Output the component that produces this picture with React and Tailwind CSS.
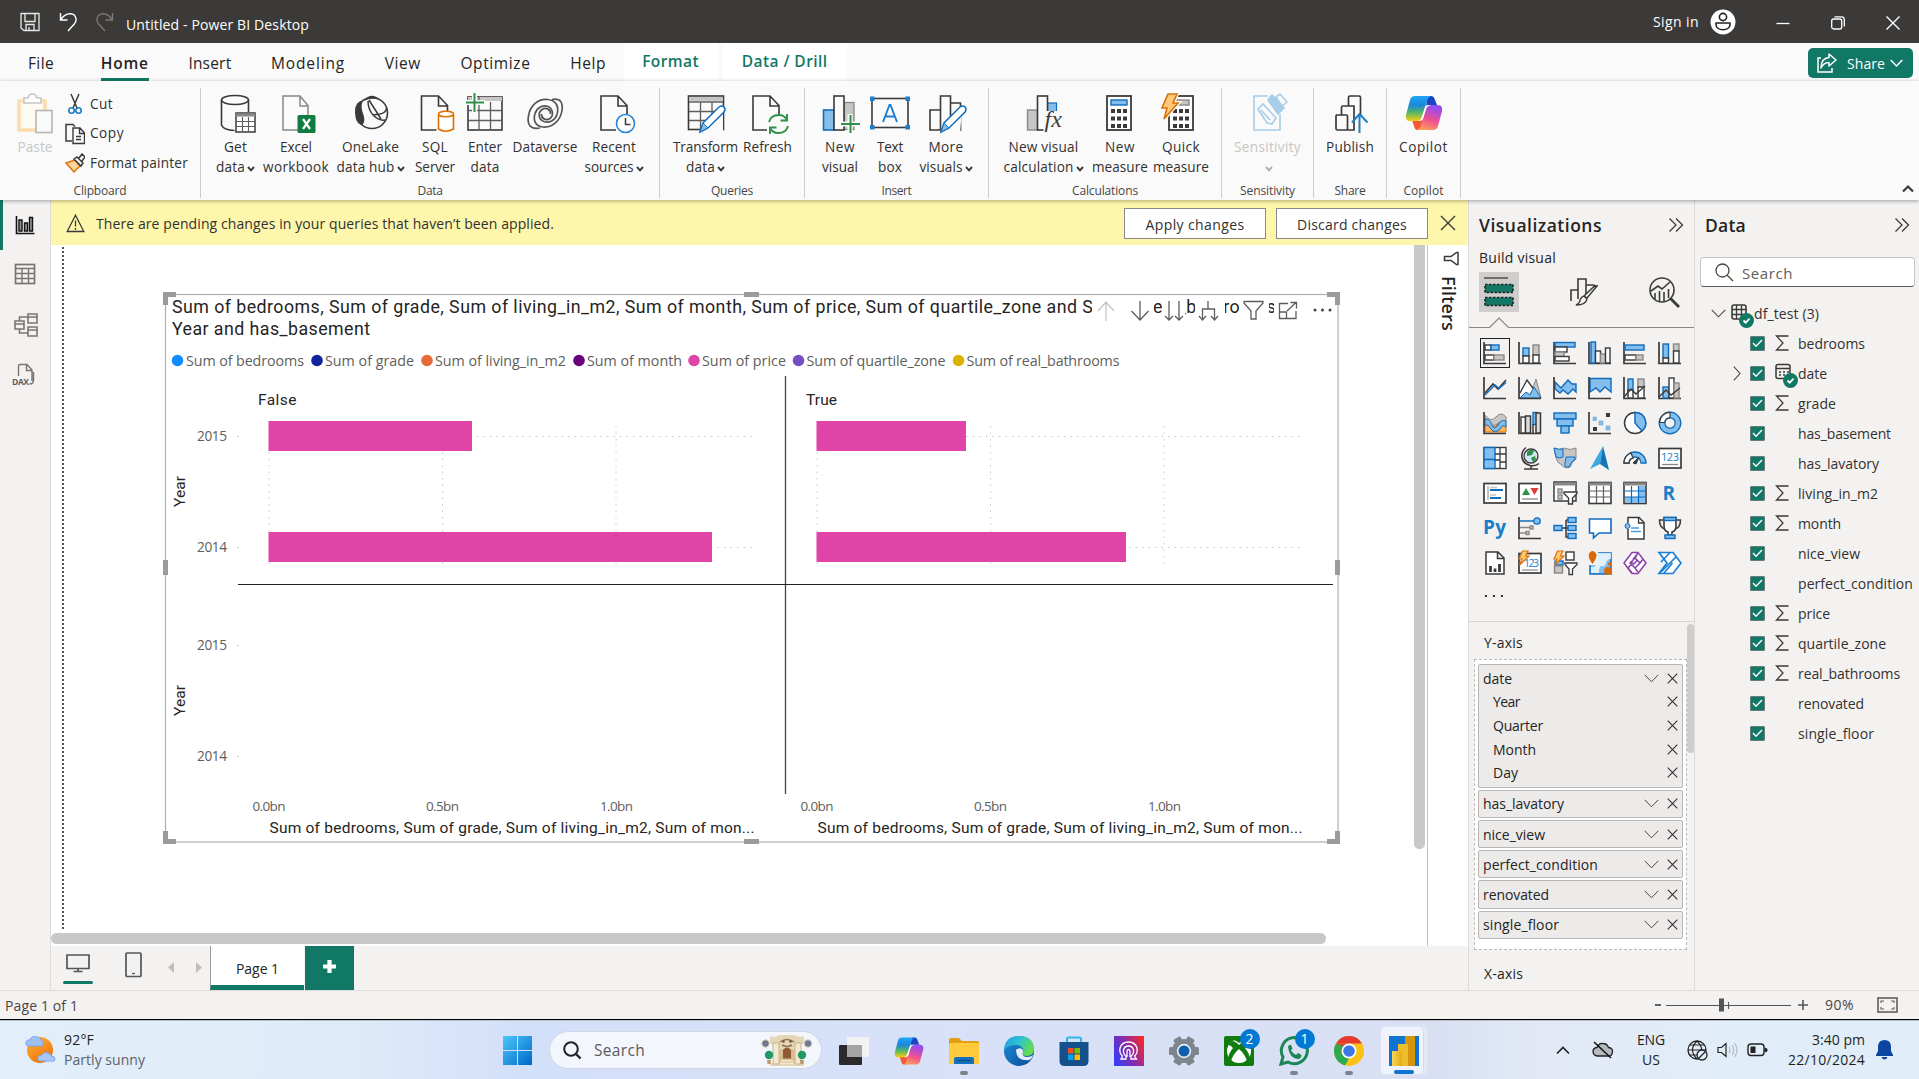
import React, { useLayoutEffect, useRef, useState } from "react";

const INK = "#3b3a39";
const BLUE = "#0f6cbd";
const SKY = "#83beec";
const GRAY = "#c8c6c4";
const MID = "#7a7574";

/* Text whose letter spacing is tuned so that it takes up exactly w pixels. */
function Fit({ w, className = "", children }) {
  const ref = useRef(null);
  const [ls, setLs] = useState(0);
  useLayoutEffect(() => {
    const natural = ref.current.getBoundingClientRect().width;
    setLs((w - natural) / String(children).length);
  }, []);
  return (
    <span ref={ref} className={"inline-block whitespace-nowrap " + className} style={{ letterSpacing: ls + "px" }}>
      {children}
    </span>
  );
}

function Svg({ w = 24, h = w, vb, className = "", children, ...rest }) {
  return (
    <svg width={w} height={h} viewBox={vb || `0 0 ${w} ${h}`} fill="none" className={"block shrink-0 " + className} {...rest}>
      {children}
    </svg>
  );
}

const Caret = ({ c = INK }) => (
  <Svg w={8} h={6} className="ml-[2px] mt-[3px]">
    <path d="M1 1l3 3.4L7 1" stroke={c} strokeWidth="1.9" />
  </Svg>
);

/* ---------- title bar ---------- */
function TitleBar() {
  return (
    <div className="flex h-[43px] shrink-0 items-center bg-[#3b3a38] text-white">
      <Svg w={20} className="ml-[20px]">
        <path d="M1 1.5h18v17H4L1 16z M5 1.5v8h10v-8 M6 18.5v-6h8v6 M9 18v-3" stroke="#e8e8e8" strokeWidth="1.3" />
      </Svg>
      <Svg w={18} h={20} className="ml-[19px]">
        <path d="M1.5 1v7h7 M1.5 8C5 2.500 9 1.500 12 1.800c5 .6 6.500 6.500 3.500 10L9 19" stroke="#fff" strokeWidth="1.4" />
      </Svg>
      <Svg w={18} h={20} className="ml-[19px]">
        <path d="M16.500 1v7h-7 M16.500 8C13 2.500 9 1.500 6 1.800c-5 .6-6.500 6.500-3.500 10L9 19" stroke="#7c7b7a" strokeWidth="1.3" />
      </Svg>
      <Fit w={183} className="ml-[12px] mt-[5px] text-[14px]">Untitled - Power BI Desktop</Fit>
      <div className="ml-auto flex items-center">
        <Fit w={46} className="text-[14px]">Sign in</Fit>
        <Svg w={26} className="ml-[11px]">
          <circle cx="13" cy="13" r="12.500" fill="#fff" />
          <circle cx="13" cy="8" r="3.600" stroke="#222" strokeWidth="1.600" />
          <path d="M6 14h14v1.500c0 7-14 7-14 0z" stroke="#222" strokeWidth="1.600" strokeLinejoin="round" />
        </Svg>
        <Svg w={14} className="ml-[40px]"><path d="M0.500 8.500h13" stroke="#fff" strokeWidth="1.300" /></Svg>
        <Svg w={14} className="ml-[41px] mt-[3px]">
          <rect x="0.700" y="3" width="10" height="10" rx="2" stroke="#fff" strokeWidth="1.300" />
          <path d="M3.500 .8h7q2.800 0 2.800 2.800v7" stroke="#fff" strokeWidth="1.300" />
        </Svg>
        <Svg w={14} className="ml-[41px] mr-[19px] mt-[3px]"><path d="M.5 .5l13 13M13.500 .5l-13 13" stroke="#fff" strokeWidth="1.400" /></Svg>
      </div>
    </div>
  );
}

/* ---------- ribbon tabs ---------- */
const TABS = [["File", 26], ["Home", 48], ["Insert", 43], ["Modeling", 74], ["View", 36], ["Optimize", 70], ["Help", 36]];
function Tabs() {
  return (
    <div className="flex h-[38px] shrink-0 bg-[#fafafa] text-[#252423]">
      <div className="flex gap-[39.700px] pl-[28px]">
        {TABS.map(([t, w]) => (
          <div key={t} className={"flex flex-col justify-between pt-[8px] " + (t === "File" ? "mr-[7px]" : "")}>
            <Fit w={w} className={"text-[15.500px] leading-[24px] " + (t === "Home" ? "font-semibold" : "")}>{t}</Fit>
            <div className={"h-[3px] " + (t === "Home" ? "bg-[#117865]" : "")} />
          </div>
        ))}
      </div>
      <div className="ml-[17.500px] flex h-[38px] w-[94px] items-center justify-center bg-white font-semibold text-[#117865]">
        <Fit w={57} className="text-[15.500px]">Format</Fit>
      </div>
      <div className="ml-[5px] flex h-[38px] w-[124px] items-center justify-center bg-white font-semibold text-[#117865]">
        <Fit w={86} className="text-[15.500px]">Data / Drill</Fit>
      </div>
      <div className="ml-auto mr-[6px] mt-[5px] flex h-[30px] w-[105px] items-center rounded-[5px] bg-[#117865] pl-[9px] text-white">
        <Svg w={20}>
          <path d="M4 5H1v14h14v-4" stroke="#fff" strokeWidth="1.500" />
          <path d="M12 1l7 6-7 6V9.500C8 9.500 6 11 4 15c0-6 3-10 8-10.500z" stroke="#fff" strokeWidth="1.500" strokeLinejoin="round" />
        </Svg>
        <Fit w={38} className="ml-[10px] text-[14px] font-medium">Share</Fit>
        <Svg w={13} h={9} className="ml-[5px]"><path d="M.7 1l5.800 6 5.800-6" stroke="#fff" strokeWidth="1.500" /></Svg>
      </div>
    </div>
  );
}

/* ---------- ribbon icons ---------- */
const Page = ({ x = 2, d = 34 }) => (
  <path d={`M${x + 15} ${d + 3}H${x}V3h17l9 9.500V22 M${x + 17} 3v10h9`} stroke={INK} strokeWidth="1.600" />
);
const Pencil = ({ x = 0 }) => (
  <g transform={`translate(${x} 0)`}>
    <path d="M11 39l3-9L30 14q3-2 5 0t0 5L19 35z" fill="#fff" stroke={BLUE} strokeWidth="1.500" />
    <path d="M11 39l3-9 5 5z" fill={SKY} stroke={BLUE} />
  </g>
);
const RI = {
  get: (
    <>
      <ellipse cx="16" cy="7" rx="13.500" ry="4.500" stroke={INK} strokeWidth="1.500" />
      <path d="M2.500 7v25q2 5 13 5.500 M29.500 7v12" stroke={INK} strokeWidth="1.600" />
      <rect x="17" y="20" width="19" height="19" fill="#fff" stroke={INK} strokeWidth="1.500" />
      <path d="M17 22h19" stroke="#8a8886" strokeWidth="3" />
      <path d="M17 28.500h19M17 33.500h19M23.500 24v15M29.500 24v15" stroke="#605e5c" strokeWidth="1.100" />
    </>
  ),
  excel: (
    <>
      <path d="M18 37H3V3h17l8 9.500V22 M20 3v10h8" stroke="#8a8886" strokeWidth="1.500" />
      <rect x="17.500" y="22" width="18" height="18" rx="1.500" fill="#107c41" />
      <path d="M23 26l7 10M30 26l-7 10" stroke="#fff" strokeWidth="2.200" />
    </>
  ),
  onelake: (
    <>
      <circle cx="20" cy="20" r="15.500" stroke={INK} strokeWidth="1.600" />
      <path d="M12 8Q16 2 22 3q4 1 5 4-7-3-15 1z" fill={INK} />
      <path d="M3.500 24Q1 9 11 7.500q-3 6 .5 14.500 2 6-1 10-6-1-7-8z" fill={INK} />
      <path d="M16 8q0 8 5 14 6 6 12 5M21 22l7-1q6-1 6.500-6 M17 7l12 19" stroke={INK} strokeWidth="1.500" />
    </>
  ),
  sql: (
    <>
      <Page x={5} />
      <path d="M22 22v14q7 4.500 15 0V22" fill="#fff" stroke="#e07000" strokeWidth="1.600" />
      <ellipse cx="29.500" cy="21" rx="7.500" ry="2.800" fill="#fff" stroke="#e07000" strokeWidth="1.600" />
    </>
  ),
  enter: (
    <>
      <rect x="3" y="4" width="34" height="33" stroke={INK} strokeWidth="1.600" />
      <path d="M3 6h34" stroke={GRAY} strokeWidth="4" />
      <path d="M3 17.500h34M3 27.500h34M14 4v33M25.500 9v28" stroke="#605e5c" strokeWidth="1.300" />
      <path d="M0 9.500h20M9.500 -1v20" stroke="#fafafa" strokeWidth="5" />
      <path d="M1 9.500h18M9.500 0v19" stroke="#2f9148" strokeWidth="2" />
    </>
  ),
  dataverse: (
    <>
      <path d="M14 35C4 37 1 31 2.500 23 4 13 12 5 22 6.500c9 1 11 8 9 15-2 6-8 9-13 7-6-2-6-9-2-12 4-2.500 9 0 8.500 4.500" stroke="#555" strokeWidth="1.700" />
      <path d="M26 6.500c9-2 11 4 10 11C34.500 27 27 35 17 34c-8-1-10-7-8-13.500 2-6 8-9 13-7 5 2 6 9 2 12-4 2.500-9 0-8.500-4.500" stroke="#555" strokeWidth="1.700" />
    </>
  ),
  recent: (
    <>
      <Page x={5} />
      <circle cx="29.500" cy="30.500" r="9" fill="#fff" stroke="#2b88d8" strokeWidth="1.600" />
      <path d="M29.500 25v6.500h5" stroke={INK} strokeWidth="1.500" />
    </>
  ),
  transform: (
    <>
      <rect x="1.500" y="3" width="35" height="33.500" stroke={INK} strokeWidth="1.600" />
      <path d="M2 6h34" stroke={GRAY} strokeWidth="4" />
      <path d="M2 9h34M2 18.500h34M2 27.500h34M13.500 9v27M25 9v27" stroke="#605e5c" strokeWidth="1.300" />
      <path d="M12 40L36 15v25z" fill="#fafafa" />
      <Pencil x={2} />
    </>
  ),
  refresh: (
    <>
      <Page x={3} />
      <path d="M17 40V24h22v16z" fill="#fafafa" />
      <path d="M19 29q2-7 9.500-7 6 0 8.500 5M37 21v6.500h-6.500 M38 33q-2 7-9.500 7-6 0-8.500-5M20 41v-6.500h6.500" stroke="#2f9148" strokeWidth="1.900" />
    </>
  ),
  newvisual: (
    <>
      <rect x="1.500" y="17" width="10.500" height="20" fill={SKY} stroke={BLUE} strokeWidth="1.600" />
      <rect x="22" y="9.500" width="10" height="27" fill={GRAY} stroke="#8a8886" strokeWidth="1.300" />
      <rect x="12" y="3" width="10" height="34" fill="#fafafa" stroke={INK} strokeWidth="1.600" />
      <path d="M18 31h20M28 21v20" stroke="#fafafa" strokeWidth="5" />
      <path d="M19 31h19M28.500 22v18" stroke="#2f9148" strokeWidth="2" />
    </>
  ),
  textbox: (
    <>
      <rect x="2" y="5.500" width="36" height="29" stroke={INK} strokeWidth="1.600" />
      <path d="M0 3.500h4.500V8H0zM35.500 3.500H40V8h-4.500zM0 32h4.500v4.500H0zM35.500 32H40v4.500h-4.500z" fill="#1a7fd0" />
      <path d="M13 29l6.500-17h1L27 29M15 23.500h10" stroke="#1a7fd0" strokeWidth="1.900" />
    </>
  ),
  more: (
    <>
      <path d="M2 17h10.500v20H2zM22.500 10h10v27h-10z M12.500 3h10v34h-10z" stroke={INK} strokeWidth="1.600" />
      <path d="M12 40L34 17l-2 23z" fill="#fafafa" />
      <Pencil x={2} />
    </>
  ),
  calc: (
    <>
      <rect x="2" y="17" width="10" height="20" fill={GRAY} stroke="#8a8886" strokeWidth="1.400" />
      <rect x="22" y="10" width="9" height="14" fill={SKY} stroke={BLUE} strokeWidth="1.200" />
      <rect x="12" y="3" width="10" height="34" fill="#fafafa" stroke={INK} strokeWidth="1.600" />
      <path d="M18 18h19v20H18z" fill="#fafafa" />
      <text x="19" y="34" fontFamily="Liberation Serif" fontStyle="italic" fontSize="24" fill={INK}>fx</text>
    </>
  ),
  measure: (
    <>
      <rect x="7" y="3" width="24" height="34" stroke={INK} strokeWidth="1.800" fill="#fff" />
      <rect x="11" y="7" width="16" height="5" fill={SKY} stroke={BLUE} strokeWidth="1.400" />
      <path d="M11 18h4m2 0h4m2 0h4M11 25.500h4m2 0h4m2 0h4M11 33h4m2 0h4m2 0h4" stroke={INK} strokeWidth="4" />
    </>
  ),
  quick: (
    <>
      <rect x="9" y="3" width="24" height="34" stroke={INK} strokeWidth="1.800" fill="#fff" />
      <rect x="14" y="7" width="15" height="5" fill={GRAY} stroke="#8a8886" strokeWidth="1.400" />
      <path d="M13 18h4m2 0h4m2 0h4M13 25.500h4m2 0h4m2 0h4M13 33h4m2 0h4m2 0h4" stroke={INK} strokeWidth="4" />
      <path d="M8 1h9l-4 9h5L4 26l3-11H2z" fill="#ffd08a" stroke="#fafafa" strokeWidth="4" />
      <path d="M8 1h9l-4 9h5L4 26l3-11H2z" fill="#ffc978" stroke="#d8730b" strokeWidth="1.600" />
    </>
  ),
  sens: (
    <g stroke="#a6cdea" strokeWidth="1.600">
      <path d="M19 3H5v34h26V21" />
      <path d="M9 16l5-5 13 14-4 6-5-1z M12 17l9 10" fill="#fafafa" />
      <path d="M19 7l4-5 12 13-6 6z" fill="#a6cdea" />
      <path d="M27 4l4-3 7 8-5 4z" fill="#fafafa" />
    </g>
  ),
  publish: (
    <>
      <path d="M4 22h10q1 0 1 1v14H5q-1.500 0-1.500-1.500V23z M9 22v-7.500q0-1.500 1.500-1.500h11v24H15 M16 13V4.500Q16 3 17.500 3h9Q28 3 28 4.500V22" stroke={INK} strokeWidth="1.700" />
      <path d="M27 40V22M19.500 29.500L27 21l8 8.500" stroke="#1f7fc4" strokeWidth="2" />
    </>
  ),
};

const CopilotArt = ({ w = 38, h = 36, id }) => (
  <Svg w={w} h={h} vb="0 0 38 34">
    <defs>
      <linearGradient id={id + "a"} x1="0" y1="0" x2="0" y2="1">
        <stop offset="0" stopColor="#1fa8f5" /><stop offset=".35" stopColor="#1a86e0" /><stop offset=".65" stopColor="#4fb56a" /><stop offset="1" stopColor="#f8cf10" />
      </linearGradient>
      <linearGradient id={id + "b"} x1="0.300" y1="0" x2="0" y2="1">
        <stop offset="0" stopColor="#9a4bea" /><stop offset=".5" stopColor="#f0528e" /><stop offset="1" stopColor="#ffae55" />
      </linearGradient>
    </defs>
    <path d="M22 0h4q3 0 4 4l2 5h-6q-4 0-5 4z" fill="#1745c4" />
    <path d="M16 34h-4q-2 0-3-4l-2-6h7q2 0 4-4z" fill="#f4593a" />
    <path d="M10 0h16q-3 1-4 5l-5 16q-1 4-5 4H5q-5 0-4-6L5 4q1-4 5-4z" fill={`url(#${id}a)`} />
    <path d="M28 34H12q3-1 4-5l5-16q1-4 5-4h7q5 0 4 6l-4 15q-1 4-5 4z" fill={`url(#${id}b)`} />
    <path d="M22 9h4q-4 1-5 4l-3 10q-1 2-5 2 3-1 4-5l3-9z" fill="#fff" opacity=".9" />
  </Svg>
);

/* first line, width, second line, width, cell width, caret, icon view box */
const CELL = {
  get: ["Get", 23, "data", 29, "w-[57px]", 1, "-3 -1 40 42"],
  excel: ["Excel", 32, "workbook", 66, "w-[64px]", 0, "-4 -1 40 42"],
  onelake: ["OneLake", 57, "data hub", 58, "w-[85px]", 1, "-1 -1 40 42"],
  sql: ["SQL", 26, "Server", 40, "w-[44px]", 0, "-1.500 -1 40 42"],
  enter: ["Enter", 34, "data", 29, "w-[56px]", 0, "0 -1 40 42"],
  dataverse: ["Dataverse", 65, "", 0, "w-[64px]", 0, "-1 -1 40 42"],
  recent: ["Recent", 44, "sources", 49, "w-[74px]", 1, "-2 -1 40 42"],
  transform: ["Transform", 65, "data", 29, "w-[69px]", 1, "-1 -1 40 42"],
  refresh: ["Refresh", 49, "", 0, "w-[55px]", 0, "-2 -1 40 42"],
  newvisual: ["New", 30, "visual", 36, "w-[54px]", 0, "-2 -1 40 42"],
  textbox: ["Text", 26, "box", 24, "w-[46px]", 0, "0 -1 40 42"],
  more: ["More", 35, "visuals", 43, "w-[66px]", 1, "-2 -1 40 42"],
  calc: ["New visual", 70, "calculation", 70, "w-[89px]", 1, "-1.500 -1 40 42"],
  measure: ["New", 30, "measure", 56, "w-[64px]", 0, "0 -1 40 42"],
  quick: ["Quick", 38, "measure", 56, "w-[58px]", 0, "1 -1 40 42"],
  sens: ["Sensitivity", 67, "", 0, "w-[67px]", 1, "-1 -1 40 42"],
  publish: ["Publish", 48, "", 0, "w-[72px]", 0, "-2.500 -1 40 42"],
  copilot: ["Copilot", 49, "", 0, "w-[73px]", 0, ""],
};
function Cell({ k }) {
  const [a, aw, b, bw, cls, caret, vb] = CELL[k];
  const dis = k === "sens";
  return (
    <div className={"flex flex-col items-center " + cls + (dis ? " text-[#c8c6c4]" : "")}>
      <div className="flex h-[42px] w-[40px] items-center justify-center">
        {k === "copilot" ? <CopilotArt id="rc" w={38} h={34} /> : <Svg w={40} h={42} vb={vb} className="overflow-visible">{RI[k]}</Svg>}
      </div>
      <div className="mt-[3px] h-[20px] leading-[20px]"><Fit w={aw}>{a}</Fit></div>
      <div className="flex h-[20px] items-center justify-center leading-[20px]">
        {b ? <Fit w={bw}>{b}</Fit> : null}
        {caret ? <Caret c={dis ? "#b0aeac" : INK} /> : null}
      </div>
    </div>
  );
}

function Group({ label, lw, cls, pad, items, children }) {
  return (
    <div className={"flex h-[110px] shrink-0 flex-col border-r border-[#cfcdcb] " + cls}>
      <div className={"flex h-[91px] pt-[4px] " + pad}>{children || items.map((k) => <Cell key={k} k={k} />)}</div>
      <div className="flex h-[19px] items-center justify-center pt-[5px] text-[12px] text-[#484644]"><Fit w={lw}>{label}</Fit></div>
    </div>
  );
}

function Ribbon() {
  return (
    <div className="z-10 flex h-[119px] shrink-0 bg-[#fafafa] pt-[7px] text-[13.600px] text-[#323130] shadow-[0_1px_4px_rgba(0,0,0,0.35)]">
      <Group label="Clipboard" lw={53} cls="w-[201px]" pad="">
        <div className="flex w-[56px] flex-col items-center pl-[14px] text-[#c8c6c4]">
          <Svg w={38} h={42} vb="-1 -1 38 42">
            <rect x="2" y="8" width="26" height="29" stroke="#fbdcb0" strokeWidth="3.500" fill="#fffaf2" />
            <path d="M7 10V5h4q1-4 4.500-4T20 5h4v5z" fill="#fff" stroke="#c8c6c4" strokeWidth="1.600" />
            <rect x="19" y="17.500" width="16" height="22" fill="#fafafa" stroke="#b8b6b4" strokeWidth="1.600" />
          </Svg>
          <Fit w={35} className="mt-[3px] leading-[20px]">Paste</Fit>
        </div>
        <div className="-mt-[3px] flex flex-col pl-[9px]">
          <div className="flex h-[30px] items-center">
            <Svg w={20} h={22}>
              <path d="M6 1l6 14M14 1L8 15" stroke={INK} strokeWidth="1.500" />
              <circle cx="6.500" cy="17.500" r="2.700" stroke="#1f7fc4" strokeWidth="1.600" /><circle cx="13.500" cy="17.500" r="2.700" stroke="#1f7fc4" strokeWidth="1.600" />
            </Svg>
            <Fit w={23} className="ml-[5px]">Cut</Fit>
          </div>
          <div className="flex h-[30px] items-center">
            <Svg w={20} h={22}>
              <path d="M7 18H1V1.500h7l2 2" stroke={INK} strokeWidth="1.500" />
              <path d="M8 5h7l4.500 5v10.500H8z M14.500 5v5.500h5 M11 13.500h5M11 16.500h5" fill="#fafafa" stroke={INK} strokeWidth="1.400" />
            </Svg>
            <Fit w={34} className="ml-[5px]">Copy</Fit>
          </div>
          <div className="flex h-[31px] items-center">
            <Svg w={20} h={22}>
              <path d="M1 10l8 9 6-6-5-6z" fill="#fbd59b" stroke="#e07000" strokeWidth="1.500" />
              <path d="M9 6l3-2 6 6-2 3z M14 5l3-4 3 3-3 4" fill="#fafafa" stroke={INK} strokeWidth="1.500" />
            </Svg>
            <Fit w={98} className="ml-[5px]">Format painter</Fit>
          </div>
        </div>
      </Group>
      <Group label="Data" lw={25} cls="w-[459px]" pad="pl-[6px]" items={["get", "excel", "onelake", "sql", "enter", "dataverse", "recent"]} />
      <Group label="Queries" lw={42} cls="w-[145px]" pad="pl-[11px]" items={["transform", "refresh"]} />
      <Group label="Insert" lw={30} cls="w-[184px]" pad="pl-[8px]" items={["newvisual", "textbox", "more"]} />
      <Group label="Calculations" lw={66} cls="w-[233px]" pad="pl-[10px]" items={["calc", "measure", "quick"]} />
      <Group label="Sensitivity" lw={55} cls="w-[92px]" pad="pl-[12px]" items={["sens"]} />
      <Group label="Share" lw={31} cls="w-[73px]" pad="" items={["publish"]} />
      <Group label="Copilot" lw={40} cls="w-[74px]" pad="" items={["copilot"]} />
      <Svg w={12} h={9} className="ml-auto mr-[5px] mt-[96px]"><path d="M1 7.500l5-5 5 5" stroke={INK} strokeWidth="2.200" /></Svg>
    </div>
  );
}

/* ---------- left navigation ---------- */
function LeftNav() {
  return (
    <div className="flex w-[51px] shrink-0 flex-col border-r border-[#dddbd9] bg-[#f3f2f1]">
      <div className="flex h-[50px] items-center border-l-[3px] border-[#117865] pl-[12px]">
        <Svg w={20}>
          <path d="M1.500 1v17.500h18" stroke="#111" strokeWidth="1.600" />
          <path d="M4 5h3v11H4zM9.500 8h3v8h-3zM14.500 2.500h3V16h-3z" fill="#999" stroke="#111" strokeWidth="1.400" />
        </Svg>
      </div>
      <div className="flex h-[50px] items-center pb-[2px] pl-[14px]">
        <Svg w={22}>
          <rect x="1.500" y="1.500" width="19" height="19" stroke={MID} strokeWidth="1.700" />
          <path d="M1 5.500h20M1 10.500h20M1 15.500h20M8 5v16M14.500 5v16" stroke={MID} strokeWidth="1.400" />
        </Svg>
      </div>
      <div className="flex h-[50px] items-center pb-[1px] pl-[14px]">
        <Svg w={24}>
          <path d="M1 8h9v8H1zM1 11h9M14 1h9v9h-9zM14 4h9M14 14h9v9h-9zM14 17h9M5.500 8V4H14M5.500 16v4H14" stroke={MID} strokeWidth="1.600" />
        </Svg>
      </div>
      <div className="flex h-[50px] items-center pl-[12px]">
        <Svg w={24} h={24}>
          <path d="M6.500 13V3q0-1.500 1.500-1.500h7L20 7v11 M14.500 2v5.500H20 M21.500 9v8q0 4-4 4" stroke={MID} strokeWidth="1.400" />
          <text x="0" y="21.500" fontSize="8.500" fontWeight="700" fontFamily="Open Sans" fill="#605e5c" textLength="17">DAX</text>
        </Svg>
      </div>
    </div>
  );
}

/* ---------- chart ---------- */
const LEGEND = [
  ["Sum of bedrooms", 177.5, 186, 118, "#118DFF"],
  ["Sum of grade", 317, 325, 89, "#12239E"],
  ["Sum of living_in_m2", 427, 435, 131, "#E66C37"],
  ["Sum of month", 579, 587, 95, "#6B007B"],
  ["Sum of price", 694, 702, 84, "#E044A7"],
  ["Sum of quartile_zone", 798.5, 806.5, 139, "#744EC2"],
  ["Sum of real_bathrooms", 958.5, 966.5, 153, "#D9B300"],
];
function Chart() {
  const din = "Roboto, sans-serif";
  const axis = "Sum of bedrooms, Sum of grade, Sum of living_in_m2, Sum of mon...";
  const grid = { stroke: "#c8c8c8", strokeWidth: 1, strokeDasharray: "1.500 5" };
  return (
    <svg width="1180" height="556" viewBox="162 290 1180 556" className="block" fontFamily="Open Sans, sans-serif">
      <rect x="165.500" y="294.500" width="1172.500" height="547.500" fill="#fff" stroke="#b3b0ad" strokeWidth="1.200" />
      <g fontFamily={din} fontSize="17.800" fill="#252423">
        <text x="172" y="312.500" textLength="1128">Sum of bedrooms, Sum of grade, Sum of living_in_m2, Sum of month, Sum of price, Sum of quartile_zone and Sum of real_bathrooms by</text>
        <text x="172" y="334.500" textLength="198">Year and has_basement</text>
      </g>
      <path d="M1092 296h62v26h-62zM1162 296h23v26h-23zM1195 296h30v26h-30zM1239 296h30v26h-30zM1274 296h63v26h-63z" fill="#fff" />
      <g stroke="#605e5c" strokeWidth="1.300" fill="none">
        <path d="M1106 321v-19M1098 311l8-9 8 9" stroke="#c8c6c4" />
        <path d="M1140 301v19M1131.500 311l8.500 9 8.500-9" />
        <path d="M1169 301v19M1165 316l4 4 4-4M1179 301v19M1175 316l4 4 4-4" />
        <path d="M1208 301v8M1202.500 320v-11h12v11M1199 316l3.500 4 3.500-4M1211 316l3.500 4 3.500-4" />
        <path d="M1244 301.500h19v1.500l-7 8v8h-5v-8l-7-8z" />
        <path d="M1288 303.500h-8.500v15h16.500V311M1279.500 312h7v6.500M1287 311l9-8.500M1290.500 302.500h6v6" />
      </g>
      <g fill="#444"><circle cx="1315" cy="310" r="1.500" /><circle cx="1322.500" cy="310" r="1.500" /><circle cx="1330" cy="310" r="1.500" /></g>
      {LEGEND.map(([t, cx, x, w, c]) => (
        <g key={t}>
          <circle cx={cx} cy="360.500" r="5.800" fill={c} />
          <text x={x} y="366" fontSize="14.300" fill="#605e5c" textLength={w}>{t}</text>
        </g>
      ))}
      <g fontFamily={din} fontSize="15.500" fill="#252423">
        <text x="258" y="405" textLength="38.500">False</text>
        <text x="806" y="405" textLength="31">True</text>
        <text transform="translate(185 507) rotate(-90)" textLength="31">Year</text>
        <text transform="translate(185 716) rotate(-90)" textLength="31">Year</text>
        <text x="269.500" y="833" textLength="485">{axis}</text>
        <text x="817.500" y="833" textLength="485">{axis}</text>
      </g>
      {[0, 548].map((dx) => (
        <g key={dx} transform={`translate(${dx} 0)`}>
          <path d="M269 426v138M442.500 426v138M616 426v138M269 436.500h484M269 547.500h484" {...grid} />
          <text x="252.500" y="811" fontSize="13.500" fill="#605e5c" textLength="33">0.0bn</text>
          <text x="426" y="811" fontSize="13.500" fill="#605e5c" textLength="33">0.5bn</text>
          <text x="600" y="811" fontSize="13.500" fill="#605e5c" textLength="33">1.0bn</text>
        </g>
      ))}
      <path d="M237 436.500h2M237 547.500h2M237 645.500h2M237 756.500h2" stroke="#c8c8c8" />
      <path d="M268.500 421H472v30H268.500zM268.500 532H712v30H268.500zM816.500 421H966v30H816.500zM816.500 532H1126v30H816.500z" fill="#E044A7" />
      <g fontSize="13.700" fill="#605e5c">
        <text x="197" y="441" textLength="30">2015</text>
        <text x="197" y="552" textLength="30">2014</text>
        <text x="197" y="650" textLength="30">2015</text>
        <text x="197" y="761" textLength="30">2014</text>
      </g>
      <path d="M785.500 376v418" stroke="#444" strokeWidth="1.300" />
      <path d="M238 584.500h1095" stroke="#222" strokeWidth="1.200" />
      <path d="M163 292h13v5h-8v8h-5zM1340 292h-13v5h8v8h5zM163 844h13v-5h-8v-8h-5zM1340 844h-13v-5h8v-8h5zM744 292h15v5h-15zM744 839h15v5h-15zM163 560h5v15h-5zM1335 560h5v15h-5z" fill="#9d9b99" />
    </svg>
  );
}

/* ---------- report canvas ---------- */
function Notice() {
  return (
    <div className="flex h-[45px] shrink-0 items-center bg-[#fef7ab] pt-px text-[14px] text-[#323130]">
      <Svg w={19} h={19} className="ml-[15px]">
        <path d="M9.500 1.200l8.300 16.300H1.200z M9.500 6.500v6M9.500 14v2" stroke={INK} strokeWidth="1.300" />
      </Svg>
      <Fit w={458} className="ml-[11px] mt-px">There are pending changes in your queries that haven’t been applied.</Fit>
      <div className="ml-auto flex h-[31px] w-[142px] items-center justify-center border border-[#8a8886] bg-white pt-[2px]"><Fit w={99}>Apply changes</Fit></div>
      <div className="ml-[10px] flex h-[31px] w-[152px] items-center justify-center border border-[#8a8886] bg-white pt-[2px]"><Fit w={110}>Discard changes</Fit></div>
      <Svg w={16} className="ml-[12px] mr-[12px]"><path d="M1 1l14 14M15 1L1 15" stroke={INK} strokeWidth="1.400" /></Svg>
    </div>
  );
}

function Canvas() {
  return (
    <div className="flex w-[1417px] shrink-0 flex-col">
      <Notice />
      <div className="flex h-[701px] shrink-0">
        <div className="flex w-[1377px] flex-col border-r border-[#c4c2c0] bg-white">
          <div className="flex h-[688px]">
            <div className="mt-[2px] h-[682px] w-[13px] border-r-2 border-dotted border-[#555]" />
            <div className="ml-[98px] mt-[45px]"><Chart /></div>
            <div className="ml-auto mr-[2px] h-[604px] w-[11px] rounded-b-full bg-[#c8c8c8]" />
          </div>
          <div className="h-[11px] w-[1275px] rounded-full bg-[#c8c8c8]" />
        </div>
        <div className="flex flex-1 flex-col items-center bg-white pt-[6px]">
          <Svg w={18} h={16} className="ml-[6px]"><path d="M16 1.500v12h-1.500L9 9.500H2.500v-4H9l5.500-4z" stroke={INK} strokeWidth="1.500" /></Svg>
          <div className="ml-[2px] mt-[9px] text-[18px] font-semibold leading-[20px] tracking-[0.200px] text-[#252423] [writing-mode:vertical-rl]">Filters</div>
        </div>
      </div>
      <div className="flex h-[44px] shrink-0 items-start bg-[#f3f2f1]">
        <div className="ml-[12px] flex h-[38px] w-[30px] flex-col items-center justify-between pt-[8px]">
          <Svg w={24} h={19}><path d="M1 1h22v13.500H1zM12 14.500V18M7.500 17.500h9" stroke="#555" strokeWidth="1.700" /></Svg>
          <div className="h-[3px] w-[30px] rounded-full bg-[#117865]" />
        </div>
        <Svg w={17} h={26} className="ml-[32px] mt-[6px]"><rect x="1" y="1" width="15" height="23.500" rx="1" stroke="#555" strokeWidth="1.700" /><path d="M7 21.500h3" stroke="#555" strokeWidth="1.300" /></Svg>
        <Svg w={6} h={11} className="ml-[26px] mt-[16px]"><path d="M6 0v11L0 5.500z" fill="#c0bebc" /></Svg>
        <Svg w={6} h={11} className="ml-[22px] mt-[16px]"><path d="M0 0v11l6-5.500z" fill="#c0bebc" /></Svg>
        <div className="ml-[8px] flex h-[44px] w-[94px] items-center justify-center border-b-[5px] border-l border-b-[#117865] border-l-[#999] bg-white pt-[5px] text-[14px] font-medium text-[#252423]">
          <Fit w={43}>Page 1</Fit>
        </div>
        <div className="ml-px flex h-[44px] w-[49px] items-center justify-center bg-[#117865] pb-[3px]">
          <Svg w={15}><path d="M7.500 1v13M1 7.500h13" stroke="#fff" strokeWidth="4.200" /></Svg>
        </div>
      </div>
    </div>
  );
}

/* ---------- visualization gallery ---------- */
const L = <path d="M1 1v21.500h22" stroke={INK} strokeWidth="1.700" />;
const B = (x, y, w, h, f = SKY, s = BLUE) => <rect key={`${x}-${y}-${f}`} x={x} y={y} width={w} height={h} fill={f} stroke={s} strokeWidth="1.400" />;
const W = (x, y, w, h) => B(x, y, w, h, "#fff", INK);
const G = (x, y, w, h) => B(x, y, w, h, GRAY, "#8a8886");
const Frame = <rect x="1" y="2.500" width="22" height="19.500" fill="#fff" stroke={INK} strokeWidth="1.700" />;
const Bolt = <path d="M4.500 0H10L7.500 5H11L1.500 14 4 8H1z" fill="#ffc978" stroke="#d8730b" strokeWidth="1.200" />;
const VIS = [
  <>{L}{W(2, 4, 6, 5)}{B(8, 4, 8, 5)}{W(2, 14, 9, 5)}{G(11, 14, 10, 5)}</>,
  <>{L}{B(5, 7, 6, 8)}{W(5, 15, 6, 7)}{G(15, 4, 6, 10)}{W(15, 14, 6, 8)}</>,
  <>{L}{B(2, 1.5, 20, 4.5)}{W(2, 6, 12, 5)}{G(2, 11, 9, 4.5)}{W(2, 15.5, 14, 4.5)}</>,
  <>{L}{B(3, 1, 4.5, 21)}{W(7.500, 10, 5, 12)}{G(12.500, 13, 5, 9)}{W(17.500, 7, 4.500, 15)}</>,
  <>{L}{B(2, 4, 19, 5)}{W(2, 14, 11, 5)}{G(13, 14, 7, 5)}</>,
  <>{L}{B(5, 3, 5.500, 14)}{W(5, 17, 5.500, 5)}{G(15.500, 3, 5.500, 7)}{W(15.500, 10, 5.500, 12)}</>,
  <>{L}<path d="M2 17l8-9 5 5 8-9" stroke={INK} strokeWidth="1.600" /><path d="M2 19L12 9l4 3.500 7-6" stroke={BLUE} strokeWidth="1.400" /></>,
  <><path d="M11 22l7-19 5 19z" fill={GRAY} stroke="#8a8886" /><path d="M2 17L9 4l8 11" stroke={INK} strokeWidth="1.400" fill="#fff" /><path d="M2 22l6-6 4 3 4-8 7 11z" fill={SKY} stroke={BLUE} />{L}</>,
  <><path d="M2 6l6 6 7-8 4 4h4v8l-3-3-5 5-5-4-3 3-5-4z" fill={SKY} stroke={BLUE} strokeWidth="1.400" />{L}</>,
  <><path d="M2 2.500h21V16l-6-5-5 5-4-4-6 4z" fill={SKY} stroke={BLUE} strokeWidth="1.400" />{L}</>,
  <>{L}{B(5, 3, 5, 13)}{W(5, 14, 5, 8)}{G(15, 3, 6, 8)}{W(15, 11, 6, 11)}<path d="M1 21l7-8 5 5 9-8" stroke={INK} strokeWidth="1.400" /></>,
  <>{L}{B(5, 11, 6, 11)}{W(11, 2, 5, 20)}{G(16, 7, 5, 15)}<path d="M1 21l7-7 5 5 9-7" stroke={INK} strokeWidth="1.400" /></>,
  <><path d="M2 4q6 8 11 2t10 0v6q-5-3-9 1t-12-3z" fill={GRAY} stroke="#8a8886" /><path d="M2 13h5q4 5 8 0h8v8H2z" fill="#ffb45c" stroke="#d8730b" /><path d="M2 8q5 0 7 6t6 0q3-6 8-4v6q-4-3-6 2-5 5-9 0-2-5-6-4z" fill={SKY} stroke={BLUE} />{L}</>,
  <>{L}{W(3, 6, 4.500, 16)}{B(15, 1.500, 4, 12)}<path d="M7.500 5h5v17h-5zM15 13v9M18 2h4.500v20H18z" fill="#ddd" stroke={INK} strokeWidth="1.500" /></>,
  <>{B(1, 2, 22, 6)}{B(4, 8, 16, 7)}{B(8, 15, 8, 7)}</>,
  <>{L}<path d="M18 2h4v4h-4zM5 16h4v4H5z" fill={INK} /><path d="M5 6h3.500v3.500H5zM11 10h4v4h-4zM18 15h4v4h-4z" fill={SKY} stroke="#6ba9dc" strokeWidth=".6" /></>,
  <><circle cx="12" cy="12" r="10.500" fill="#fff" stroke={INK} strokeWidth="1.500" /><path d="M12 1.500V12l7 8A10.500 10.500 0 0 0 12 1.500z" fill={SKY} stroke={BLUE} strokeWidth="1.500" /></>,
  <><circle cx="12" cy="12" r="8" stroke={SKY} strokeWidth="5.500" /><path d="M4 12a8 8 0 0 1 8-8" stroke="#fff" strokeWidth="5.500" /><circle cx="12" cy="12" r="10.800" stroke={BLUE} strokeWidth="1.300" /><circle cx="12" cy="12" r="5.200" stroke={BLUE} strokeWidth="1.300" fill="#f3f2f1" /><path d="M1.500 11A10.800 10.800 0 0 1 12 1.200M6.800 11.500A5.200 5.200 0 0 1 12 6.800M1 11.500h6M12 1v6" stroke={INK} strokeWidth="1.200" /></>,
  <>{W(1, 1.500, 22, 21)}{B(1, 1.500, 11, 12)}{B(1, 13.500, 11, 9)}<path d="M12 8h11M17 8v14M12 14h5M17 16h6M17 2v6" stroke={INK} strokeWidth="1.300" /></>,
  <><circle cx="13" cy="10" r="7" fill="#cfe7f7" stroke={INK} strokeWidth="1.300" /><path d="M9 6q4-4 7-1l-2 4-5 1zM13 12l4-2 1 4-3 2z" fill="#2f9148" /><path d="M8 1.500q-5 4-4 10t8 8q6 1 9-2M13 20v3M6 23h14" stroke={INK} strokeWidth="1.600" /></>,
  <><path d="M1 2q6 3 10 0 6 3 12 0v11q-4 3-6 8-6 2-8-2-5-2-6-7z" fill={GRAY} stroke="#8a8886" /><path d="M1 2q5 2 9 1v8q-4 2-7 0zM13 11h9v2q-4 3-6 8-5 1-4-4z" fill={SKY} stroke={BLUE} /></>,
  <><path d="M15 0L2 23l10-5z" fill="#3fa9df" /><path d="M15 0l6 24-9-6z" fill="#1173b8" /></>,
  <><path d="M1 17a11 11 0 0 1 22 0h-5a6 6 0 0 0-12 0z" fill={SKY} stroke={BLUE} strokeWidth="1.300" /><path d="M1 17A11 11 0 0 1 8 7l2 5q-4 1-4 5z" fill="#fff" stroke={INK} strokeWidth="1.300" /><path d="M10 17l6-6-3 7z" fill={INK} stroke={INK} /></>,
  <>{Frame}<text x="3" y="15" fontSize="11" fontFamily="Open Sans" fill="#1a7fd0" textLength="18">123</text><path d="M4 18.500h16" stroke="#8a8886" strokeWidth="1.300" /></>,
  <>{Frame}<path d="M5 5v14" stroke="#8a8886" /><path d="M7 6.500h7M7 14h6" stroke={GRAY} strokeWidth="1.500" /><path d="M7 9h13M7 17h11" stroke={BLUE} strokeWidth="2" /></>,
  <>{Frame}<path d="M4 14l4-7 4 7z" fill="#2f9148" /><path d="M12.500 7h8l-4 7z" fill="#e03a3a" /><path d="M4 18h16" stroke="#8a8886" strokeWidth="1.300" /></>,
  <><rect x="1" y="1" width="22" height="19" fill="#fff" stroke={INK} strokeWidth="1.500" /><path d="M1 3h22" stroke="#8a8886" strokeWidth="3" />{G(5, 8, 4, 4)}{G(5, 14, 4, 4)}<path d="M11 11h13v1.500L19.500 17v6h-4v-6L11 12.500z" fill="#fff" stroke={INK} strokeWidth="1.400" /></>,
  <><rect x="1" y="1.500" width="22" height="21" fill="#fff" stroke={INK} strokeWidth="1.600" /><path d="M1 3h22" stroke="#8a8886" strokeWidth="3" /><path d="M1 10h22M1 16h22M8.500 5v17M15.500 5v17" stroke="#605e5c" strokeWidth="1.200" /></>,
  <><rect x="1" y="1.500" width="22" height="21" fill="#fff" stroke={INK} strokeWidth="1.600" /><path d="M15.500 5H22v17H2v-6h13.500z" fill={SKY} /><path d="M1 3h22" stroke="#8a8886" strokeWidth="3" /><path d="M1 10h22M1 16h22M8.500 5v17M15.500 5v17" stroke={BLUE} strokeWidth="1.200" /></>,
  <text x="4.500" y="18.500" fontSize="19" fontWeight="700" fontFamily="Open Sans" fill="#1a7fc8">R</text>,
  <text x="0" y="18" fontSize="19" fontWeight="700" fontFamily="Open Sans" fill="#1a7fc8" textLength="23">Py</text>,
  <>{L}<path d="M2 5h15" stroke={BLUE} strokeWidth="1.500" /><circle cx="19" cy="5" r="3.200" fill={SKY} stroke={BLUE} strokeWidth="1.300" /><path d="M2 11.500h10M2 17h6" stroke="#8a8886" strokeWidth="1.300" />{G(12, 10, 3, 3)}{G(8, 15.500, 3, 3)}</>,
  <><path d="M8 12h5M13 4v17h3M13 4h3M13 12h3" stroke={INK} strokeWidth="1.500" />{B(1, 9.500, 8, 5)}{B(15, 1.500, 8, 5)}{B(15, 9.500, 8, 5)}{B(15, 17.500, 8, 5)}</>,
  <path d="M1.500 3h21.500v14H11l-5.500 5V17h-4z" fill="#fff" stroke={BLUE} strokeWidth="1.600" />,
  <><path d="M5 7V1.500h11l5 5V23H5V13" fill="#fff" stroke={INK} strokeWidth="1.500" /><path d="M15.500 1.500V7H21" stroke={INK} strokeWidth="1.300" /><circle cx="4.500" cy="10" r="2.500" fill={SKY} stroke={BLUE} /><path d="M8 12h8M8 15.500h10" stroke="#4ba0de" strokeWidth="1.300" /></>,
  <><path d="M6 4H1.500q0 8 6 9M18 4h4.500q0 8-6 9" stroke={INK} strokeWidth="1.500" /><path d="M6 1.500h12V10q0 5-4 6v3h-4v-3q-4-1-4-6z" fill="#fff" stroke={INK} strokeWidth="1.600" />{B(6, 1.500, 12, 3)}{B(7, 19, 10, 3.500)}</>,
  <><path d="M3 1h12l6 6v16H3z M14.500 1v6.500H21" fill="#fff" stroke={INK} strokeWidth="1.500" /><path d="M7.500 15v6M12 17.500V21M16.500 13v8" stroke={INK} strokeWidth="2.800" /></>,
  <>{Frame}<text x="6" y="16" fontSize="10.500" fontFamily="Open Sans" fill="#1a7fd0" textLength="15">123</text><path d="M4 19h16" stroke="#8a8886" strokeWidth="1.200" />{Bolt}</>,
  <>{W(13, 1, 8, 8)}{B(2, 10, 8, 4)}{G(1.500, 15, 8, 7)}{Bolt}<path d="M12 12h12v1.500L19.500 18v5.500h-3.500V18L12 13.500z" fill="#fff" stroke={INK} strokeWidth="1.300" /></>,
  <><path d="M2 2h21v21H2z" fill={SKY} stroke={BLUE} strokeWidth="1.500" /><path d="M9 2h14v6q-4 0-5 4t-4 3-3 7H3v-6q6 0 7-5z" fill="#fff" opacity=".75" /><path d="M0 0h10v14H0z" fill="#f3f2f1" /><path d="M4.500 13Q0 7 .8 3.500 2 0 4.500 0T8.500 3.500Q9 7 4.500 13z" fill="#d8690b" /><circle cx="20" cy="20" r="4" fill="#d8690b" /><circle cx="22" cy="13" r="2" fill="#d8690b" /></>,
  <g stroke="#8b3fa8" strokeWidth="1.500" fill="#fff"><path d="M9 1.500h6l8 10.500-8 10.500H9L1 12z" /><path d="M12 7l5 5-5 5-5-5zM15 2l-5 6.500M9 22l-4-5 5-6M12 7l2-3M17 12l3-4M12 17l3 4M14 9.500L9.500 14.500" fill="none" /></g>,
  <g stroke="#1a7fd8" strokeWidth="1.700" fill="#fff"><path d="M1 1.500h14L23 12l-8 10.500H1L9 12z" /><path d="M12 1.500l-9 9.500M18 6L3 21M14.500 12L6 22" /></g>,
];

const Chev2 = () => (
  <Svg w={16} h={16}><path d="M1.500 1.500L8 8l-6.500 6.500M8 1.500L14.500 8 8 14.500" stroke={INK} strokeWidth="1.300" /></Svg>
);
const DownX = ({ down }) => (
  <div className="ml-auto flex items-center gap-[8px]">
    {down ? <Svg w={15} h={9}><path d="M.7 .8l6.800 7 6.800-7" stroke="#484644" strokeWidth="1" /></Svg> : null}
    <Svg w={11}><path d="M.7 .7l9.600 9.600M10.300 .7L.7 10.300" stroke="#323130" strokeWidth="1.100" /></Svg>
  </div>
);
const SUBS = [["Year", 27], ["Quarter", 50], ["Month", 43], ["Day", 25]];
const CARDS = [["has_lavatory", 81], ["nice_view", 62], ["perfect_condition", 115], ["renovated", 66], ["single_floor", 76]];

function Visualizations() {
  return (
    <div className="flex w-[227px] shrink-0 flex-col border-l border-r border-[#dddbd9] bg-[#f3f2f1] text-[14px] text-[#252423]">
      <div className="flex h-[45px] items-center pl-[10px] pt-[5px]">
        <Fit w={123} className="text-[17.500px] font-semibold">Visualizations</Fit>
        <div className="ml-auto mr-[10px]"><Chev2 /></div>
      </div>
      <div className="h-[27px] pl-[10px] leading-[25px]"><Fit w={77} className="font-medium">Build visual</Fit></div>
      <div className="flex h-[40px] items-center pl-[10px]">
        <div className="flex h-[40px] w-[40px] items-center justify-center bg-[#d0cecc]">
          <Svg w={30} h={34}>
            <path d="M0 3h24" stroke={INK} strokeWidth="1.300" />
            <path d="M1 9.500h28v8H1zM1 22.500h28v8H1z" fill="#117865" stroke="#222" strokeWidth="1.600" strokeDasharray="2.500 1.500" />
          </Svg>
        </div>
        <Svg w={28} h={30} className="ml-[51px]">
          <path d="M1 24V13h7v9M8 13V2h8v16M16 8h7l3 1" stroke={INK} strokeWidth="1.600" />
          <path d="M27 9L17 21l-3-2L24 9.500zM14 19l3 3q-1 6-11 6 4-2 4-5 1-3 4-4z" fill="#f3f2f1" stroke={INK} strokeWidth="1.400" />
        </Svg>
        <Svg w={31} h={31} className="ml-[51px]">
          <circle cx="13" cy="13" r="12" stroke={INK} strokeWidth="1.600" />
          <path d="M2 14l7-5 4 3 8-7M6 16v6M10.500 14v10M15 15v9M19.500 12v9" stroke={INK} strokeWidth="1.600" />
          <path d="M21.500 21.500L30 30" stroke={INK} strokeWidth="2.800" />
        </Svg>
      </div>
      <Svg w={225} h={16}><path d="M0 15.500h20.500l9.500-9.500 9.500 9.500H225" stroke="#8a8886" strokeWidth="1.200" /></Svg>
      <div className="mt-[7px] grid w-[218px] auto-rows-[35px] grid-cols-[repeat(6,35px)] pl-[8px]">
        {VIS.map((v, i) => (
          <div key={i} className="flex h-[35px] w-[35px] items-center justify-center">
            <div className={"flex h-[30px] w-[30px] items-center justify-center " + (i === 0 ? "border border-[#222]" : "")}>
              <Svg w={24} className="overflow-visible">{v}</Svg>
            </div>
          </div>
        ))}
      </div>
      <div className="flex h-[42px] items-start gap-[6px] border-b border-[#d8d6d4] pl-[16px] pt-[15px]">
        {[0, 1, 2].map((i) => <div key={i} className="h-[2px] w-[2px] bg-[#333]" />)}
      </div>
      <div className="flex flex-1">
        <div className="flex w-[218px] flex-col pl-[5px]">
          <div className="h-[37px] pl-[10px] pt-[10px] leading-[22px]"><Fit w={39}>Y-axis</Fit></div>
          <div className="flex h-[291px] w-[213px] flex-col gap-[2px] border border-dashed border-[#bdbbb9] bg-white pl-[3px] pt-[4px]">
            <div className="w-[205px] rounded-[2px] border border-[#b8b6b4] bg-[#ecebea] pb-[2px] pl-[4px] pr-[4px]">
              <div className="flex h-[25px] items-center pt-[2px]"><Fit w={29}>date</Fit><DownX down /></div>
              {SUBS.map(([t, w]) => (
                <div key={t} className="flex h-[23.700px] items-center pl-[10px]"><Fit w={w}>{t}</Fit><DownX /></div>
              ))}
            </div>
            {CARDS.map(([t, w]) => (
              <div key={t} className="flex h-[28.200px] w-[205px] shrink-0 items-center rounded-[2px] border border-[#b8b6b4] bg-[#ecebea] pl-[4px] pr-[4px]"><Fit w={w}>{t}</Fit><DownX down /></div>
            ))}
          </div>
          <div className="pl-[10px] pt-[13px] leading-[22px]"><Fit w={39}>X-axis</Fit></div>
        </div>
        <div className="mt-[2px] h-[129px] w-[7px] rounded-full bg-[#d0cecc]" />
      </div>
    </div>
  );
}

/* ---------- data pane ---------- */
const FIELDS = [
  ["bedrooms", 67, "s"], ["date", 29, "d"], ["grade", 38, "s"], ["has_basement", 93], ["has_lavatory", 81], ["living_in_m2", 80, "s"],
  ["month", 43, "s"], ["nice_view", 62], ["perfect_condition", 115], ["price", 32, "s"], ["quartile_zone", 88, "s"],
  ["real_bathrooms", 102, "s"], ["renovated", 66], ["single_floor", 76],
];
const Badge = () => <><circle cx="15.500" cy="16.500" r="7.500" fill="#117865" /><path d="M12.500 16.500l2.200 2.200 3.800-4" stroke="#fff" strokeWidth="1.800" /></>;

function DataPane() {
  return (
    <div className="flex w-[224px] flex-1 flex-col bg-[#f3f2f1] text-[14px] text-[#323130]">
      <div className="flex h-[45px] items-center pl-[10px] pt-[5px]">
        <Fit w={41} className="text-[17.500px] font-semibold text-[#252423]">Data</Fit>
        <div className="ml-auto mr-[9px]"><Chev2 /></div>
      </div>
      <div className="ml-[5px] mt-[12px] flex h-[30px] w-[215px] items-center rounded-[4px] border border-[#c8c6c4] border-b-[#605e5c] bg-white pl-[14px]">
        <Svg w={19}><circle cx="7.500" cy="7.500" r="6.500" stroke="#484644" strokeWidth="1.300" /><path d="M12 12l6 6" stroke="#484644" strokeWidth="1.300" /></Svg>
        <Fit w={51} className="ml-[8px] mt-[2px] text-[15px] text-[#605e5c]">Search</Fit>
      </div>
      <div className="mt-[11px] flex h-[30px] items-center pl-[16px]">
        <Svg w={15} h={9}><path d="M.7 .8l6.800 7 6.800-7" stroke="#484644" strokeWidth="1.100" /></Svg>
        <Svg w={24} h={26} vb="0 -2 24 26" className="ml-[5px] mt-[3px]">
          <rect x="1" y="1" width="14" height="14" rx="2" stroke={INK} strokeWidth="1.600" /><path d="M1 5.500h14M1 10.500h14M5.500 1v14M10.500 1v14" stroke={INK} strokeWidth="1.300" /><Badge />
        </Svg>
        <Fit w={65} className="-ml-[1px]">df_test (3)</Fit>
      </div>
      {FIELDS.map(([t, w, k]) => (
        <div key={t} className="flex h-[30px] items-center">
          <div className="flex w-[55px] items-center pl-[38px]">
            {k === "d" ? <Svg w={8} h={15}><path d="M.8 .7L7 7.500.8 14.300" stroke="#484644" strokeWidth="1.100" /></Svg> : null}
          </div>
          <div className="flex h-[15px] w-[15px] items-center justify-center rounded-[1px] border border-[#6b7d78] bg-[#117865]">
            <Svg w={11} h={9}><path d="M1 4l3 3.200L10 1" stroke="#fff" strokeWidth="1.400" /></Svg>
          </div>
          <div className="flex h-[30px] w-[33px] items-center pl-[10px]">
            {k === "s" ? <Svg w={14} h={16}><path d="M13.500 1H1.500l6.500 7-6.500 7h12" stroke={INK} strokeWidth="1.300" /></Svg> : null}
            {k === "d" ? (
              <Svg w={24} h={26} vb="0 -2 24 26" className="mt-[3px]">
                <rect x="1" y="0.500" width="14" height="14" rx="2" stroke={INK} strokeWidth="1.500" /><path d="M1 4.500h14M4 8h2m2 0h2m2 0h2M4 11h2m2 0h2" stroke={INK} strokeWidth="1.500" /><Badge />
              </Svg>
            ) : null}
          </div>
          <Fit w={w}>{t}</Fit>
        </div>
      ))}
    </div>
  );
}

/* ---------- status bar ---------- */
function StatusBar() {
  return (
    <div className="flex h-[30px] shrink-0 items-center border-b border-t border-b-black border-t-[#dddbd9] bg-[#f3f2f1] text-[14px] text-[#484644]">
      <Fit w={73} className="ml-[5px] mt-[1px]">Page 1 of 1</Fit>
      <Svg w={153} h={16} className="ml-auto">
        <path d="M0 8h6" stroke="#555" strokeWidth="1.800" />
        <path d="M11 8.500h125M73.500 5v7" stroke="#555" strokeWidth="1.100" />
        <path d="M64 1.500h5v13h-5z" fill="#555" />
        <path d="M143 8h10M148 3v10" stroke="#555" strokeWidth="1.600" />
      </Svg>
      <Fit w={29} className="ml-[17px] -mt-[1px]">90%</Fit>
      <Svg w={21} h={16} className="ml-[23px] mr-[21px]">
        <rect x="1" y="1" width="19" height="14" stroke="#605e5c" strokeWidth="1.600" />
        <path d="M4 6V4h3M14 4h3v2M4 10v2h3M14 12h3v-2" stroke="#605e5c" strokeWidth="1.100" />
      </Svg>
    </div>
  );
}

/* ---------- taskbar ---------- */
const Badge2 = ({ n }) => (
  <span className="absolute -right-[6px] -top-[7px] flex h-[20px] w-[20px] items-center justify-center rounded-full bg-[#0078d4] text-[14px] leading-none text-white">{n}</span>
);
const APPS = [
  ["tasks", <Svg w={30}><rect x="0" y="9" width="23" height="20" rx="1" fill="#2a2a2a" /><rect x="8" y="1" width="22" height="20" rx="1" fill="#f2f2f2" /><path d="M8 9h15v12H8z" fill="#a4a4a4" /></Svg>],
  ["copilot", <CopilotArt id="tb" w={30} h={28} />],
  ["files", <Svg w={30} h={28}><path d="M0 3q0-2 2-2h8l3 3h15q2 0 2 2v5H0z" fill="#e0a010" /><rect y="6" width="30" height="21" rx="1.500" fill="#ffcb3d" /><path d="M5 27v-5q0-2 2-2h16q2 0 2 2v5z" fill="#1272c0" /><path d="M8 23.500h14" stroke="#0a4a86" strokeWidth="1.300" /></Svg>, "dot"],
  ["edge", (
    <Svg w={30}>
      <defs>
        <linearGradient id="e1" x1="0" y1="0" x2="1" y2=".4"><stop offset="0" stopColor="#1da0e0" /><stop offset=".55" stopColor="#2fc3cf" /><stop offset="1" stopColor="#62dc50" /></linearGradient>
        <linearGradient id="e2" x1="0" y1="0" x2="1" y2="1"><stop offset="0" stopColor="#1b8fe0" /><stop offset="1" stopColor="#0c4a94" /></linearGradient>
      </defs>
      <circle cx="15" cy="15" r="15" fill="url(#e2)" />
      <path d="M0 14Q1 0 15 0q14 0 15 12 0 8-7 8-5 0-5-3 2-1 1-4-2-4-7-4-8 0-12 5z" fill="url(#e1)" />
      <path d="M12 14q3-3 6-1 2 2 .3 4.500Q19 21 23 21q4 0 6-2-1 4-4 5-10 1-12-5-1-3-1-5z" fill="#e3ecf8" />
    </Svg>
  )],
  ["store", (
    <Svg w={30}><path d="M8 8V3q0-1.500 1.500-1.500h11Q22 1.500 22 3v5" stroke="#35b5e8" strokeWidth="2.200" /><path d="M0.500 6h29v19q0 5-5 5h-19q-5 0-5-5z" fill="#15508c" /><path d="M9 12h5.500v5.500H9z" fill="#f25022" /><path d="M15.500 12H21v5.500h-5.500z" fill="#7fba00" /><path d="M9 18.500h5.500V24H9z" fill="#00a4ef" /><path d="M15.500 18.500H21V24h-5.500z" fill="#ffb900" /></Svg>
  )],
  ["game", (
    <Svg w={30}>
      <defs><linearGradient id="g1" x1="0" y1=".7" x2="1" y2=".2"><stop offset="0" stopColor="#3a3cf5" /><stop offset=".5" stopColor="#8a2ba8" /><stop offset="1" stopColor="#f7282c" /></linearGradient></defs>
      <path d="M0 0h30v30H0z" fill="url(#g1)" />
      <path d="M7 23l1.500-3Q5 17 6 12q2-6 8.500-6T23 12q1 5-2.500 8l2 3h-5.500v-3q3-2 2.500-6-1-4-5-4t-5 4q-.5 4 2.500 6v3z M13 21v-6q1.500-3 3 0v6" stroke="#fff" strokeWidth="1.300" />
    </Svg>
  )],
  ["gear", (
    <Svg w={30}>
      <g fill="#7d858d"><circle cx="15" cy="15" r="12" />
        {[0, 60, 120, 180, 240, 300].map((a) => <rect key={a} x="11" y="0" width="8" height="7" rx="1.500" transform={`rotate(${a + 30} 15 15)`} />)}
      </g>
      <circle cx="15" cy="15" r="7.200" fill="#e9eef5" /><circle cx="15" cy="15" r="5.500" fill="#0f5fb0" />
    </Svg>
  )],
  ["xbox", (
    <Svg w={30}><rect width="30" height="30" rx="2" fill="#107c10" /><circle cx="15" cy="15" r="12" fill="#fff" /><path d="M8 4q4 0 7 3 3-3 7-3l-3-2h-8zM15 9q-4-4-7-4-3 2-4 4 3 0 5 3-5 6-5 12l3 2q1-7 8-13 7 6 8 13l3-2q0-6-5-12 2-3 5-3-1-2-4-4-3 0-7 4z" fill="#107c10" /></Svg>
  ), "", "2"],
  ["whatsapp", (
    <Svg w={30}><path d="M2 28l2-7A13 13 0 1 1 9 26z" stroke="#1a8754" strokeWidth="3" /><path d="M9 11q1-3 3-2l1.500 3.500-1.500 2q2 3 5 4.500l2-2 3.500 2q0 4-4 4-8-1-9.500-12z" fill="#1a8754" /></Svg>
  ), "dot", "1"],
  ["chrome", (
    <Svg w={30}><circle cx="15" cy="15" r="15" fill="#fbc116" /><path d="M2 7.500A15 15 0 0 1 28 7.500H15z" fill="#e33b2e" /><path d="M2 7.500l6.500 11.300 6.500 3.700-4 7A15 15 0 0 1 2 7.500z" fill="#2da94f" /><path d="M2 7.500L8.500 18.800 15 7.500z" fill="#e33b2e" /><path d="M2 7.500L8.500 18.800 11 11z" fill="#2da94f" /><circle cx="15" cy="15" r="7.500" fill="#fff" /><circle cx="15" cy="15" r="5.800" fill="#3b78e7" /></Svg>
  ), "dot"],
];

function Taskbar() {
  return (
    <div className="flex h-[59px] shrink-0 items-center border-t border-[#b9c2cc] bg-[linear-gradient(90deg,#e2eef8_0%,#dfebf8_18%,#d3e0fa_27%,#d8e1f8_50%,#d9e0f4_75%,#e2e9f5_80%,#e1edf8_90%,#e0edf8_100%)] text-[14px] text-[#1f1f1f]">
      <Svg w={31} h={30} className="-mt-[3px] ml-[25px]">
        <defs><linearGradient id="sun" x1="0" y1="0" x2=".6" y2="1"><stop offset="0" stopColor="#fbb62c" /><stop offset="1" stopColor="#f07316" /></linearGradient></defs>
        <circle cx="15" cy="16" r="13" fill="url(#sun)" />
        <path d="M3 12q-3-1-2-4t4-2q2-5 6-3 5 0 5 3 3 1 2 4 0 2-2 2z" fill="#9fc0f0" stroke="#7ea6e6" />
        <path d="M15 27q-3-1-2-4 1-2 4-2 2-4 6-2 3 1 3 3 4 0 4 3t-3 2z" fill="#a9c7f5" stroke="#7ea6e6" />
      </Svg>
      <div className="-mt-[1px] ml-[8px] flex w-[200px] flex-col text-[14px] leading-[20px]">
        <div><Fit w={30}>92°F</Fit></div>
        <div className="text-[#5c6269]"><Fit w={81}>Partly sunny</Fit></div>
      </div>
      <Svg w={29} className="ml-[239px]">
        <defs><linearGradient id="win" x1="0" y1="0" x2="1" y2="1"><stop offset="0" stopColor="#4cc8fa" /><stop offset="1" stopColor="#0067c8" /></linearGradient></defs>
        <path d="M0 0h14v14H0zM15 0h14v14H15zM0 15h14v14H0zM15 15h14v14H15z" fill="url(#win)" />
      </Svg>
      <div className="ml-[17px] flex h-[38px] w-[273px] items-center rounded-full border border-[#cfd6e2] bg-[#f3f7fd] pl-[13px]">
        <Svg w={19}><circle cx="8" cy="8" r="6.800" stroke="#222" strokeWidth="2" /><path d="M13 13l4.500 4.500" stroke="#222" strokeWidth="2.400" /></Svg>
        <Fit w={51} className="ml-[12px] mt-[2px] text-[15.500px] text-[#5b5b5b]">Search</Fit>
        <Svg w={52} h={32} className="ml-auto mr-[8px]">
          <path d="M9 2l4 1 6-2h14l6 2 4-1v7l-3 2v18h3v3H9v-3h3V11L9 9z" fill="#e6d6b8" />
          <path d="M12 9h6v21h-6zM34 9h6v21h-6z" fill="#f3e8d0" stroke="#bfa678" strokeWidth=".8" />
          <path d="M19 8q7-5 14 0M21 11q5 3 10 0" stroke="#8d7450" strokeWidth="1.500" /><circle cx="22.500" cy="7.500" r="1.300" fill="#6b5537" /><circle cx="29.500" cy="7.500" r="1.300" fill="#6b5537" />
          <path d="M18 30V17q8-6 16 0v13z" fill="#d6be92" /><path d="M22 24.500V16q4-5 8 0v8.500z" fill="#8e5a35" />
          <path d="M20 26h12v1.500H20zM19 28.500h14V30H19z" fill="#f3e8d0" />
          <circle cx="4.500" cy="9.500" r="3.700" fill="#6d7796" stroke="#d8c8ac" /><circle cx="47" cy="9.500" r="3.700" fill="#6d7796" stroke="#d8c8ac" />
          <circle cx="8" cy="21" r="4.200" fill="#1f9a66" /><circle cx="41" cy="21" r="4.200" fill="#1f9a66" /><path d="M6 26h4l-.5 4h-3zM39 26h4l-.5 4h-3z" fill="#b89b6e" />
        </Svg>
      </div>
      <div className="ml-[4px] flex">
        {APPS.map(([k, art, dot, n]) => (
          <div key={k} className="flex h-[58px] w-[55px] flex-col items-center pt-[15px]">
            <div className="relative flex h-[30px] items-center">{art}{n ? <Badge2 n={n} /> : null}</div>
            <div className={"mt-[5px] h-[4px] w-[8px] rounded-full " + (dot ? "bg-[#7d838c]" : "")} />
          </div>
        ))}
        <div className="ml-[4px] mt-[5px] flex h-[49px] w-[48px] rounded-[5px] border border-[#dfe4f0] bg-[#e6eaf5]">
          <div className="flex h-[47px] w-[43px] flex-col items-center rounded-[5px] border-r border-[#d3d9e8] bg-[#f0f3fb] pl-[3px] pt-[9px]">
            <Svg w={30}>
              <defs><linearGradient id="pb" x1="0" y1="0" x2="1" y2="0"><stop offset="0" stopColor="#f7d45c" /><stop offset="1" stopColor="#e3ac12" /></linearGradient></defs>
              <path d="M0 0h30v30H0z" fill="#0e74d0" /><path d="M16 0h10v30H16z" fill="#d6930c" /><path d="M9 8h10v22H9z" fill="#edbd2c" /><path d="M3 15h10v15H3z" fill="url(#pb)" />
            </Svg>
            <div className="mt-[4px] h-[4px] w-[20px] rounded-full bg-[#0e74d0]" />
          </div>
        </div>
      </div>
      <div className="ml-auto flex items-center">
        <Svg w={14} h={9}><path d="M1 7.500l6-6 6 6" stroke="#1f1f1f" strokeWidth="1.600" /></Svg>
        <Svg w={22} h={18} className="ml-[22px]">
          <path d="M5 15q-4-1-4-4.500T5 6.500Q7 2 11 2.500q4 0 5.500 4Q21 7 20.500 11T17 15z" fill="#b5b8bd" stroke="#222" strokeWidth="1.300" /><path d="M2 1l17 16" stroke="#111" strokeWidth="1.500" />
        </Svg>
        <div className="ml-[23px] flex w-[28px] flex-col items-center text-[14px] leading-[20px]"><Fit w={28}>ENG</Fit><Fit w={18}>US</Fit></div>
        <Svg w={21} className="ml-[22px]">
          <circle cx="10" cy="10" r="9" stroke="#222" strokeWidth="1.300" /><path d="M1 10h18M2.500 5h15M2.500 15h9M10 1q-9 9 0 18M10 1q5 5 4.500 9" stroke="#222" strokeWidth="1.100" />
          <circle cx="15" cy="15" r="5" fill="#e1edf8" stroke="#222" strokeWidth="1.300" /><path d="M12 18l6-6" stroke="#222" strokeWidth="1.200" />
        </Svg>
        <Svg w={21} h={16} className="ml-[9px]"><path d="M1 5.500h3.500L9 1.500v13l-4.500-4H1z" stroke="#222" strokeWidth="1.200" /><path d="M12 5q2 3 0 6M15 3q3.500 5 0 10M17.500 1q5 7 0 14" stroke="#b3bac2" strokeWidth="1.200" /></Svg>
        <Svg w={21} h={14} className="ml-[9px]"><rect x="1" y="1" width="16" height="11.500" rx="3" stroke="#222" strokeWidth="1.400" /><path d="M3.500 3.500h5v6.500h-5z" fill="#222" /><path d="M18 5l2 1v2l-2 1z" fill="#222" stroke="#222" /></Svg>
        <div className="-mt-[1px] ml-[20px] flex w-[77px] flex-col items-end text-[14px] leading-[20px]"><Fit w={53}>3:40 pm</Fit><Fit w={77}>22/10/2024</Fit></div>
        <Svg w={17} h={20} className="ml-[11px] mr-[26px]"><path d="M8.500 0q6 0 6.500 6v5l2 4v1H0v-1l2-4V6Q2.500 0 8.500 0zM5.500 17h6q-1 2.500-3 2.500t-3-2.500z" fill="#0b46a0" /></Svg>
      </div>
    </div>
  );
}

export default function App() {
  return (
    <div className="flex h-[1079px] w-[1919px] flex-col overflow-hidden bg-[#f3f2f1] font-['Open_Sans','Noto_Sans',sans-serif]">
      <TitleBar />
      <Tabs />
      <Ribbon />
      <div className="flex h-[790px] shrink-0">
        <LeftNav />
        <Canvas />
        <Visualizations />
        <DataPane />
      </div>
      <StatusBar />
      <Taskbar />
    </div>
  );
}
